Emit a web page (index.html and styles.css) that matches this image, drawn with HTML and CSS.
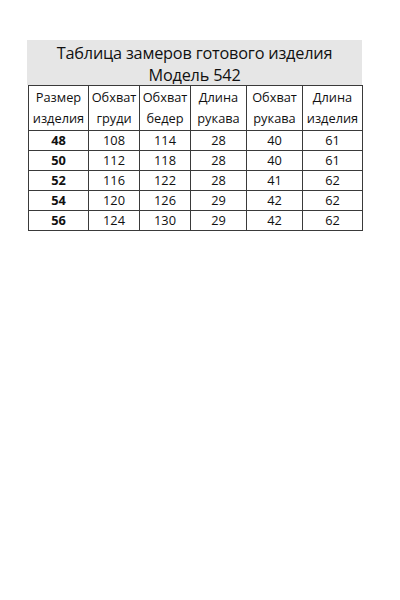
FILE: index.html
```html
<!DOCTYPE html>
<html lang="ru">
<head>
<meta charset="utf-8">
<link rel="stylesheet" href="styles.css">
</head>
<body>
<div class="sheet">
  <div class="title">Таблица замеров готового изделия<br>Модель 542</div>
  <table class="sizes">
    <colgroup>
      <col class="c1"><col class="c2"><col class="c3"><col class="c4"><col class="c5"><col class="c6">
    </colgroup>
    <thead>
      <tr>
        <th>Размер<br>изделия</th>
        <th>Обхват<br>груди</th>
        <th>Обхват<br>бедер</th>
        <th>Длина<br>рукава</th>
        <th>Обхват<br>рукава</th>
        <th>Длина<br>изделия</th>
      </tr>
    </thead>
    <tbody>
      <tr><td class="sz">48</td><td>108</td><td>114</td><td>28</td><td>40</td><td>61</td></tr>
      <tr><td class="sz">50</td><td>112</td><td>118</td><td>28</td><td>40</td><td>61</td></tr>
      <tr><td class="sz">52</td><td>116</td><td>122</td><td>28</td><td>41</td><td>62</td></tr>
      <tr><td class="sz">54</td><td>120</td><td>126</td><td>29</td><td>42</td><td>62</td></tr>
      <tr><td class="sz">56</td><td>124</td><td>130</td><td>29</td><td>42</td><td>62</td></tr>
    </tbody>
  </table>
</div>
</body>
</html>
```
FILE: styles.css
```css
html, body {
  margin: 0;
  padding: 0;
  background: #ffffff;
}
body {
  width: 400px;
  height: 600px;
  font-family: "Open Sans", "Noto Sans", sans-serif;
  color: #111111;
}
.sheet {
  padding-top: 40px;
  padding-left: 27px;
  width: 335px;
}
.title {
  background: #e6e6e6;
  height: 45px;
  box-sizing: border-box;
  padding-top: 2px;
  text-align: center;
  font-size: 16.3px;
  line-height: 22px;
  letter-spacing: -0.2px;
}
.sizes {
  margin-left: 1px;
  border-collapse: collapse;
  table-layout: fixed;
  width: 334px;
  font-size: 12.8px;
}
.c1 { width: 60px; }
.c2 { width: 51px; }
.c3 { width: 51px; }
.c4 { width: 56px; }
.c5 { width: 56px; }
.c6 { width: 60px; }
.sizes th, .sizes td {
  border: 1px solid #3a3a3a;
  padding: 0;
  text-align: center;
  font-weight: normal;
}
.sizes th {
  height: 44px;
  line-height: 21px;
}
.sizes td {
  height: 19px;
  line-height: 19px;
}
.sizes td.sz {
  font-weight: bold;
}
```
